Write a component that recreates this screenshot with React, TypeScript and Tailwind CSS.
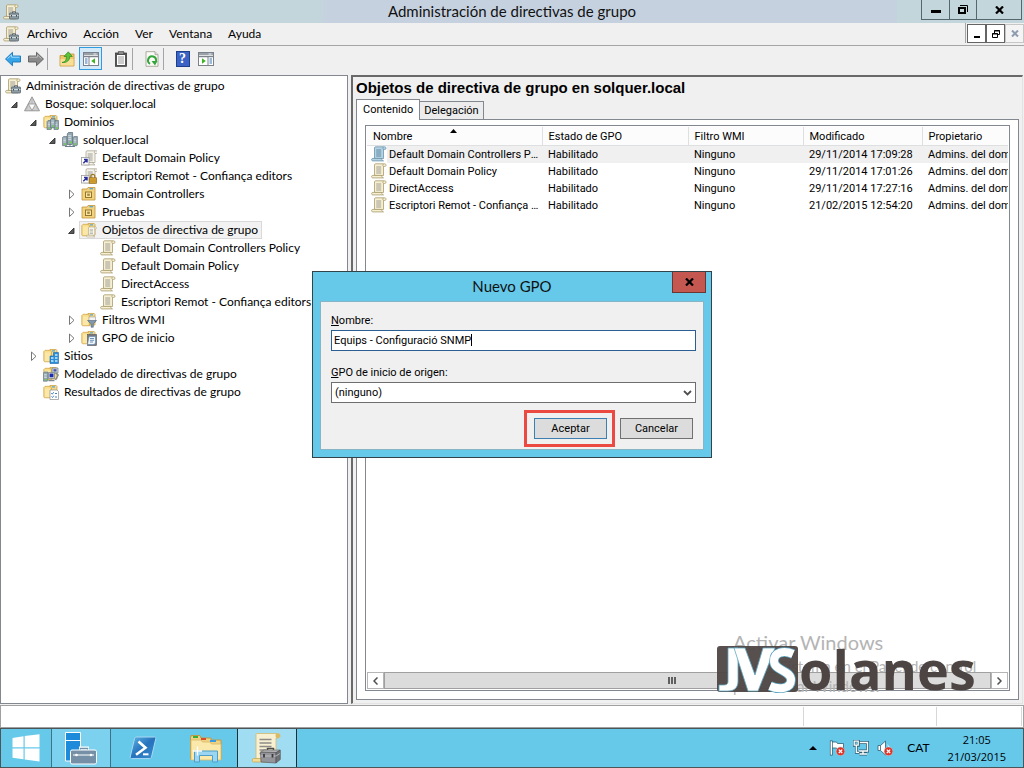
import { useState } from "react";
import type { ReactNode } from "react";
import clsx from "clsx";

const UI_FONT = "font-['Lato','Open_Sans',sans-serif]";
const LIST_FONT = "font-['Roboto','Liberation_Sans',sans-serif]";

/* ---------- icons ---------- */

function Icon({ children, size = 16, className }: { children: ReactNode; size?: number; className?: string }) {
  return (
    <svg width={size} height={size} viewBox="0 0 16 16" className={clsx("shrink-0", className)} aria-hidden="true">
      {children}
    </svg>
  );
}

function ScrollShape({ fill = "#f6efd2", edge = "#a89a6c", line = "#8b8a86" }: { fill?: string; edge?: string; line?: string }) {
  return (
    <>
      <path d="M4.500.8h9c1 0 1.500.7 1.500 1.400S14.500 3.500 13.500 3.500h-1V12.500H3.500V2C3.500 1.200 4 .8 4.500.8z" fill={fill} stroke={edge} strokeWidth=".8" />
      <path d="M1.800 12.400h8.700c0 1.200.8 2 2 2.500H2C.9 14.900.6 14.200.6 13.600s.4-1.200 1.200-1.200z" fill={fill} stroke={edge} strokeWidth=".8" />
      <path d="M12.500 1c-.8.5-.8 2 0 2.500" fill="none" stroke={edge} strokeWidth=".8" />
      <path d="M5.200 4h5M5.200 6h5M5.200 8h5M5.200 10h5" stroke={line} strokeWidth=".8" />
    </>
  );
}

function ScrollIcon({ blue = false }: { blue?: boolean }) {
  return (
    <Icon>
      {blue ? <ScrollShape fill="#b4d3e4" edge="#6c93a8" line="#4d7690" /> : <ScrollShape />}
    </Icon>
  );
}

function ToolboxShape() {
  return (
    <>
      <path d="M9.500 9V7.800h3V9" fill="none" stroke="#55626b" strokeWidth="1" />
      <rect x="6.500" y="9" width="9" height="6" rx=".6" fill="#8d9ba3" stroke="#586670" strokeWidth=".8" />
      <path d="M6.500 11.500h9" stroke="#d6dee2" strokeWidth=".9" />
      <path d="M8.500 11v1.600M13.500 11v1.600" stroke="#3f4b53" />
    </>
  );
}

function ConsoleIcon({ size = 16 }: { size?: number }) {
  return (
    <Icon size={size}>
      <ScrollShape />
      <ToolboxShape />
    </Icon>
  );
}

function FolderShape() {
  return (
    <>
      <path d="M6 2.500 7 1.500h6.200l.8.9V13H6z" fill="#f4d98a" stroke="#c79c3b" strokeWidth=".7" />
      <path d="M.8 3.500 2 2.300h5.500L8.500 4v9.800H1.500L.8 13z" fill="#f8dd8c" stroke="#cda144" strokeWidth=".7" />
      <path d="M2 4.500h5v8.500H2z" fill="#fbe7a8" />
      <path d="M9 2.900h3" stroke="#4fa3dc" strokeWidth="1.200" />
    </>
  );
}

function ServerShape({ x, y }: { x: number; y: number }) {
  return (
    <g transform={`translate(${x} ${y})`}>
      <path d="M0 1 1 0h3.600v8.500L4 9.200H0z" fill="#93a7b1" stroke="#596c76" strokeWidth=".6" />
      <path d="M.8 2.500h2.600M.8 4h2.600M.8 5.500h2.600" stroke="#dfe8ec" strokeWidth=".7" />
      <path d="M2.200 7.600h1.500" stroke="#5fe01c" strokeWidth="1.300" />
    </g>
  );
}

function ForestIcon() {
  return (
    <Icon>
      <path d="M8 .8 15.500 14.800H.5z" fill="#cfcfcf" stroke="#858585" strokeWidth=".8" />
      <path d="M8 14.500 4.300 8h7.400z" fill="#fafafa" stroke="#858585" strokeWidth=".7" />
      <path d="M8 1v6.500M4.300 8 2.500 13.500M11.700 8l2 5.500" stroke="#a9a9a9" strokeWidth=".7" />
    </Icon>
  );
}

function DomainsIcon() {
  return (
    <Icon>
      <FolderShape />
      <ServerShape x={4} y={6.500} />
      <ServerShape x={11} y={6.500} />
      <ServerShape x={7.500} y={4.500} />
    </Icon>
  );
}

function DomainIcon() {
  return (
    <Icon>
      <path d="M3 14.500h10M8 9.500v5" stroke="#6d818c" />
      <ServerShape x={0.500} y={4.500} />
      <ServerShape x={10.800} y={4.500} />
      <g transform="translate(5.300 .5) scale(1.150 1.300)">
        <ServerShape x={0} y={0} />
      </g>
    </Icon>
  );
}

function LinkIcon({ locked = false }: { locked?: boolean }) {
  return (
    <Icon>
      <g transform="translate(1.500 0)">
        <ScrollShape fill="#f5f3ea" edge="#aaa695" />
      </g>
      <rect x=".5" y="7.500" width="7.500" height="7.500" fill="#fff" stroke="#9c9c9c" strokeWidth=".8" />
      <path d="M2.300 13.200 5.600 10M3 9.600h3v3" fill="none" stroke="#2b2f95" strokeWidth="1.500" />
      {locked && (
        <>
          <path d="M9.800 10V8.400c0-2.600 4-2.600 4 0V10" fill="none" stroke="#a07a21" strokeWidth="1.200" />
          <rect x="8.300" y="9.800" width="7.200" height="5.500" fill="#dda936" stroke="#8f671a" strokeWidth=".7" />
          <path d="M8.500 12h7M8.500 13.800h7" stroke="#b2811f" strokeWidth=".7" />
        </>
      )}
    </Icon>
  );
}

function UnitIcon() {
  return (
    <Icon>
      <path d="M1 3h5l1-1.500h7V14H1z" fill="#f2d27d" stroke="#c1953a" strokeWidth=".8" />
      <path d="M8.500 2.700h3.500" stroke="#4fa3dc" strokeWidth="1.200" />
      <rect x="4.500" y="6" width="6" height="5.500" fill="#f8e6a6" stroke="#93752c" />
      <rect x="6.200" y="7.600" width="2.600" height="2.300" fill="#a98736" />
    </Icon>
  );
}

function PolicyFolderIcon() {
  return (
    <Icon>
      <FolderShape />
      <g transform="translate(5 4.500) scale(.7)">
        <ScrollShape fill="#fffdf4" />
      </g>
    </Icon>
  );
}

function FilterFolderIcon() {
  return (
    <Icon>
      <FolderShape />
      <rect x="8" y="5" width="6.500" height="5" fill="#f3f3f3" stroke="#a3a3a3" strokeWidth=".6" />
      <path d="M6.500 8.500h9L12.300 12v3.200h-2.200V12z" fill="#8197ab" stroke="#4e6378" strokeWidth=".6" />
    </Icon>
  );
}

function StarterFolderIcon() {
  return (
    <Icon>
      <FolderShape />
      <rect x="6.500" y="4.500" width="9" height="11" fill="#77777f" stroke="#54545c" strokeWidth=".6" />
      <path d="M8 6.500h6.500v6.500l-1.500 1.500H6.500z" fill="#eef5fb" stroke="#5b87b5" strokeWidth=".6" />
      <path d="M9 8.500h4M9 10.300h4M9 12h3" stroke="#5179a5" strokeWidth=".8" />
    </Icon>
  );
}

function SitesIcon() {
  return (
    <Icon>
      <FolderShape />
      <path d="M10.500 4.500H15.500V15.500H7V8h3.500z" fill="#2a8ed8" stroke="#1765a8" strokeWidth=".6" />
      <path d="M8 10h2.500M12 10h2.500M8 13h2.500M12 13h2.500M12 7h2.500" stroke="#cdeaff" strokeWidth="1.400" />
    </Icon>
  );
}

function ModelingIcon() {
  return (
    <Icon>
      <FolderShape />
      <path d="M9 2h6v5H9z" fill="#cfd5da" stroke="#777f87" strokeWidth=".7" />
      <path d="M10.500 3.200h3v2.300h-3z" fill="#4555a5" />
      <ServerShape x={0.300} y={6} />
      <path d="M5.500 6.500h6v6h-6z" fill="#cfd5da" stroke="#777f87" strokeWidth=".7" />
      <path d="M6.600 7.600h3.800v3.600H6.600z" fill="#1d2ab2" />
      <path d="M12.500 6.800 15.200 9l-2.700 5M5.500 14.500h6" fill="none" stroke="#818a92" strokeWidth="1.400" />
    </Icon>
  );
}

function ResultsIcon() {
  return (
    <Icon>
      <FolderShape />
      <path d="M7 6h7l1.500 1.500v8H7z" fill="#fff" stroke="#8e8e8e" strokeWidth=".7" />
      <path d="m8.300 9 1 1.200 1.400-2M12 9.500h2M8.500 12.500l1 1 1.300-1.800M12 13h2" fill="none" stroke="#2b74b5" strokeWidth=".9" />
    </Icon>
  );
}

function ArrowIcon({ forward = false }: { forward?: boolean }) {
  return (
    <Icon className={forward ? "-scale-x-100" : undefined}>
      <path
        d="M.5 8 7.500 1.300v3.700h8v6H7.500v3.700z"
        fill={forward ? "#8a8a8a" : "#37a4e8"}
        stroke={forward ? "#5d5d5d" : "#1774b8"}
        strokeWidth=".9"
      />
      <path d="M2.500 7.600 6.600 3.800v2.400h7.800" fill="none" stroke={forward ? "#bdbdbd" : "#a6dcff"} strokeWidth="1" />
    </Icon>
  );
}

function FolderUpIcon() {
  return (
    <Icon>
      <path d="M1 4.500h5L7.500 3H15v12H1z" fill="#efc96b" stroke="#c1953a" strokeWidth=".8" />
      <path d="M1.500 8h13v6.500h-13z" fill="#f8df98" />
      <path d="M3 11.500C6.500 11 7.500 8.500 7.500 5.500H5L9.300.8l4 4.700h-2.600c0 4-3 6.500-7.700 6z" fill="#5bc43a" stroke="#2c8a1b" strokeWidth=".7" />
    </Icon>
  );
}

function PaneIcon({ flipped = false }: { flipped?: boolean }) {
  return (
    <Icon>
      <rect x=".5" y="1.500" width="15" height="13" fill="#fff" stroke="#7b828c" />
      <path d="M1 3h14M1 5.500h14" stroke="#7b828c" strokeWidth="1.300" />
      <path d="M10.500 3h3" stroke="#e5edf5" />
      {flipped ? (
        <>
          <path d="M10 6v8" stroke="#7b828c" />
          <path d="M11.500 8h2.500M11.500 10h2.500M11.500 12h2.500" stroke="#3975b5" />
          <path d="M4 7.200v5.600L7.800 10z" fill="#3fb524" />
        </>
      ) : (
        <>
          <path d="M6 6v8" stroke="#7b828c" />
          <path d="M2 8h2.500M2 10h2.500M2 12h2.500" stroke="#3975b5" />
          <path d="M12 7.200v5.600L8.200 10z" fill="#3fb524" />
        </>
      )}
    </Icon>
  );
}

function ClipboardIcon() {
  return (
    <Icon>
      <rect x="2.500" y="2" width="11" height="13.300" fill="#555" stroke="#3c3c3c" strokeWidth=".8" />
      <rect x="4" y="4" width="8" height="10" fill="#fff" />
      <rect x="5.200" y=".7" width="5.600" height="2.800" fill="#8a8a8a" stroke="#3c3c3c" strokeWidth=".6" />
      <path d="M5 6h6M5 8h6M5 10h6M5 12h6" stroke="#8d8d8d" strokeWidth=".9" />
    </Icon>
  );
}

function RefreshIcon() {
  return (
    <Icon>
      <path d="M2 .7h9l3 3v11.600H2z" fill="#fbfbf6" stroke="#9a9a8d" strokeWidth=".8" />
      <path d="M11 .7v3h3" fill="#ddd" stroke="#9a9a8d" strokeWidth=".7" />
      <path d="M6 12.800A4 4 0 1 1 12 10" fill="none" stroke="#33a63b" strokeWidth="2" />
      <path d="M7.500 10h6L11 14.500z" fill="#33a63b" />
    </Icon>
  );
}

function HelpIcon() {
  return (
    <span className="grid h-4 w-3.5 place-items-center border border-[#1c3f8c] bg-[#3b62c4] font-['Liberation_Serif',serif] text-sm leading-none font-bold text-white">
      ?
    </span>
  );
}

function WindowsLogo() {
  return (
    <svg width="28" height="28" viewBox="0 0 28 28" aria-hidden="true">
      <path d="M.5 4 11.500 2.300V13.200H.5zM12.700 2.100 27.500.3V13.200H12.700zM.5 14.400h11v10.900L.5 23.700zM12.700 14.400H27.500v13L12.700 25.500z" fill="#fff" />
    </svg>
  );
}

function ServerManagerIcon() {
  return (
    <svg width="34" height="34" viewBox="0 0 34 34" aria-hidden="true">
      <path d="M1.500 1.500h15V30h-15z" fill="#1d8bd9" stroke="#fff" />
      <path d="M1.500 9.500h15" stroke="#fff" />
      <path d="M16.500 19v-2h7v2" fill="none" stroke="#fff" strokeWidth="3" />
      <path d="M16.500 19v-1.500h7V19" fill="none" stroke="#7590a6" strokeWidth="1.500" />
      <rect x="6.500" y="19" width="26" height="14" rx="1.500" fill="#7590a6" stroke="#fff" />
      <path d="M9 24h21" stroke="#fff" />
      <circle cx="12.500" cy="24" r="1.300" fill="#fff" />
      <circle cx="27" cy="24" r="1.300" fill="#fff" />
    </svg>
  );
}

function PowerShellIcon() {
  return (
    <svg width="28" height="26" viewBox="0 0 28 26" aria-hidden="true">
      <defs>
        <linearGradient id="ps" x1="0" y1="0" x2="1" y2="1">
          <stop offset="0" stopColor="#62b7e6" />
          <stop offset=".5" stopColor="#2672bd" />
          <stop offset="1" stopColor="#3d8fd0" />
        </linearGradient>
      </defs>
      <path d="M7.500 2h18c1 0 1.500.7 1.300 1.600L22.500 22c-.3 1-1 1.600-2 1.600h-18c-1 0-1.500-.7-1.300-1.600L5.500 3.600C5.800 2.600 6.500 2 7.500 2z" fill="url(#ps)" stroke="#a9d9f2" />
      <path d="m9.500 6.500 7 6.200-9.500 7" fill="none" stroke="#fff" strokeWidth="2.600" />
      <path d="M14 19.300h5.500" stroke="#fff" strokeWidth="2" />
    </svg>
  );
}

function ExplorerIcon() {
  return (
    <svg width="34" height="30" viewBox="0 0 34 30" aria-hidden="true">
      <path d="M2 4V2.500h9L12 5h10v2h10v19H1.500V4z" fill="#efd382" stroke="#bf9a45" />
      <path d="M4 3h5v2H4z" fill="#37ad3a" />
      <path d="M12 5h5v2h-5z" fill="#d94d2c" />
      <path d="M21 7h6v2h-6z" fill="#3b9be0" />
      <path d="M2 7h10l1.500 2H21l1.500 2H32v16H2z" fill="#fae9ab" stroke="#d9b865" strokeWidth=".8" />
      <path d="M5.500 29V18h23v11h-5v-6.500h-13V29z" fill="#9cd5f1" stroke="#4d9fca" />
      <path d="M8.500 13.500v9M4 18h9" stroke="#fff" strokeWidth="1.300" />
    </svg>
  );
}

function TaskConsoleIcon() {
  return (
    <svg width="32" height="32" viewBox="0 0 32 32" aria-hidden="true">
      <path d="M6 1.500h20c2 0 3 1 3 2.500s-1 2-2.500 2H25V27H5V3c0-1 .4-1.500 1-1.500z" fill="#f8f0d3" stroke="#d3bd7c" strokeWidth=".9" />
      <path d="M2.500 26.500H18v3.500H2.500C.8 30 .8 26.500 2.500 26.500z" fill="#f3dd96" stroke="#c9a955" strokeWidth=".8" />
      <path d="M25.500 1.600c-1.500 1-1.300 3.500 0 4.300h2.300c1.800-.8 1.800-3.500 0-4.300z" fill="#d9bb67" />
      <path d="M8.500 7.500h12M8.500 11h12M8.500 14.500h12M8.500 18h7M8.500 21.500h3" stroke="#8c8b88" strokeWidth="1.300" />
      <path d="M16.500 19v-2.500h6V19" fill="none" stroke="#4a4a4a" strokeWidth="1.500" />
      <path d="M9.500 20 13 18h16l-3 2.500z" fill="#b6b6b8" stroke="#5e5e60" strokeWidth=".6" />
      <path d="M9.500 20.500H25V31l-15-1z" fill="#94959a" stroke="#5c5c60" strokeWidth=".7" />
      <path d="M25 20.500 29.300 18v9.500L25 31z" fill="#6f7074" stroke="#4d4d50" strokeWidth=".6" />
      <path d="M9.800 24H25l4-2.500" fill="none" stroke="#c6c6c9" strokeWidth=".8" />
      <path d="M13 22v3.500M21.500 22v3.500" stroke="#3a3a3c" strokeWidth="1.800" />
    </svg>
  );
}

function ErrorBadge() {
  return (
    <>
      <circle cx="11.500" cy="11.300" r="4.400" fill="#df3327" stroke="#b9d3dd" strokeWidth=".6" />
      <path d="m9.800 9.600 3.400 3.400M13.200 9.600 9.800 13" stroke="#fff" strokeWidth="1.300" />
    </>
  );
}

function FlagIcon() {
  return (
    <Icon>
      <path d="M2.300.5v15" stroke="#2f5f73" strokeWidth="2.800" />
      <path d="M3.300 2h4.200l1 1.500h6v6h-6l-1-1.500H3.300z" fill="#fff" stroke="#2f5f73" strokeWidth=".8" />
      <path d="M2.300 1.300v13.500" stroke="#fff" strokeWidth="1.400" />
      <ErrorBadge />
    </Icon>
  );
}

function NetworkIcon() {
  return (
    <Icon>
      <path d="M5.500 2.500h9v8.500H6M10 11v3M6.500 14h7.500" fill="none" stroke="#2f5f73" strokeWidth="3" />
      <path d="M5.500 2.500h9v8.500H6M10 11v3M6.500 14h7.500" fill="none" stroke="#fff" strokeWidth="1.400" />
      <path d="M1 1h4.500v4.500H1zM3.300 5.500V12.500h3" fill="none" stroke="#2f5f73" strokeWidth="2.700" />
      <path d="M1.200 1.200h4v4h-4zM3.300 5.500V12.300h2.700" fill="none" stroke="#fff" strokeWidth="1.300" />
    </Icon>
  );
}

function SpeakerIcon() {
  return (
    <Icon>
      <path d="M1 5.500h2.500L8.500 1v14L3.500 10.500H1z" fill="#fff" stroke="#2f5f73" strokeWidth=".8" />
      <path d="M3.500 5.500v5" stroke="#2f5f73" strokeWidth=".8" />
      <path d="M10.500 5c1 .5 1.500 1.500 1.500 2.500" fill="none" stroke="#fff" />
      <ErrorBadge />
    </Icon>
  );
}

function CloseGlyph({ color = "#000" }: { color?: string }) {
  return (
    <svg width="9" height="8" viewBox="0 0 9 8" aria-hidden="true">
      <path d="M1 0.500 8 7.500M8 .5 1 7.500" stroke={color} strokeWidth="2.200" />
    </svg>
  );
}

/* ---------- window frame ---------- */

function TitleBar() {
  return (
    <header className="relative flex h-[23px] items-center justify-between bg-linear-to-r from-[#c3d6db] from-31% via-[#c6d1e0] via-32% to-[#c6d1e0] pl-[3px]">
      <ConsoleIcon />
      <h1 className="absolute inset-x-0 text-center text-[15px] leading-[23px] text-[#111]">Administración de directivas de grupo</h1>
      <div className="relative flex h-[23px] items-start bg-[#c3d6db] pr-0.5 pl-6">
        <button type="button" aria-label="Minimizar" className="grid h-5 w-[29px] place-items-center border border-t-0 border-[#55666c]">
          <span className="mt-1 h-[3px] w-2.5 bg-black" />
        </button>
        <button type="button" aria-label="Restaurar" className="grid h-5 w-[26px] place-items-center border-b border-[#55666c]">
          <svg width="10" height="9" viewBox="0 0 10 9" aria-hidden="true">
            <path d="M2 .5h7.500V7" fill="none" stroke="#000" />
            <path d="M1 3h6v5H1z" fill="none" stroke="#000" strokeWidth="2" />
          </svg>
        </button>
        <button type="button" aria-label="Cerrar" className="grid h-5 w-[46px] place-items-center border border-t-0 border-[#55666c]">
          <CloseGlyph />
        </button>
      </div>
    </header>
  );
}

const menus = ["Archivo", "Acción", "Ver", "Ventana", "Ayuda"];

function MenuBar() {
  return (
    <div className="flex h-[23px] items-center justify-between border-b border-[#a5a5a8] bg-[#f0f0f0] pl-[3px]">
      <nav className="flex items-center gap-4">
        <span className="-mr-2">
          <ConsoleIcon />
        </span>
        {menus.map((menu) => (
          <button key={menu} type="button" className="text-xs leading-5">
            {menu}
          </button>
        ))}
      </nav>
      <div className="flex h-5 self-start border-l border-[#a5a5a8] pl-px">
        <button type="button" aria-label="Minimizar consola" className="mt-px grid h-[19px] w-[19px] place-items-center border border-[#646464] bg-white">
          <span className="mt-1.5 h-0.5 w-1.5 bg-black" />
        </button>
        <button type="button" aria-label="Restaurar consola" className="mt-px grid h-[19px] w-[19px] place-items-center border border-[#646464] bg-white">
          <svg width="8" height="8" viewBox="0 0 8 8" aria-hidden="true">
            <path d="M2.500 3V.5h5v4H6" fill="none" stroke="#000" />
            <path d="M2 1h6" stroke="#000" />
            <path d="M.5 3.500h5v4h-5z" fill="#fff" stroke="#000" />
            <path d="M0 4h6" stroke="#000" />
          </svg>
        </button>
        <button type="button" aria-label="Cerrar consola" className="mt-px grid h-[19px] w-[19px] place-items-center border border-[#c6c6c6] bg-[#f4f4f4]">
          <svg width="8" height="7" viewBox="0 0 8 7" aria-hidden="true">
            <path d="M1 .5 7 6.500M7 .5 1 6.500" stroke="#8f9bb0" strokeWidth="2" />
          </svg>
        </button>
      </div>
    </div>
  );
}

function ToolButton({ label, active = false, children }: { label: string; active?: boolean; children: ReactNode }) {
  return (
    <button
      type="button"
      aria-label={label}
      className={clsx("grid h-[23px] w-[23px] place-items-center border", active ? "border-[#2f9be0] bg-[#d5eaf9]" : "border-transparent")}
    >
      {children}
    </button>
  );
}

function Divider() {
  return <span className="mr-[7px] h-[22px] w-px bg-[#a5a5a8]" />;
}

function Toolbar() {
  return (
    <div className="flex h-[29px] items-center bg-[#f0f0f0] px-px pb-1">
      <ToolButton label="Atrás">
        <ArrowIcon />
      </ToolButton>
      <ToolButton label="Adelante">
        <ArrowIcon forward />
      </ToolButton>
      <Divider />
      <ToolButton label="Subir un nivel">
        <FolderUpIcon />
      </ToolButton>
      <span className="w-px" />
      <ToolButton label="Mostrar árbol de consola" active>
        <PaneIcon />
      </ToolButton>
      <span className="w-[7px]" />
      <ToolButton label="Copiar">
        <ClipboardIcon />
      </ToolButton>
      <Divider />
      <ToolButton label="Actualizar">
        <RefreshIcon />
      </ToolButton>
      <Divider />
      <ToolButton label="Ayuda">
        <HelpIcon />
      </ToolButton>
      <ToolButton label="Mostrar panel de acciones">
        <PaneIcon flipped />
      </ToolButton>
    </div>
  );
}

/* ---------- console tree ---------- */

type TreeNode = {
  label: string;
  icon: ReactNode;
  level: number;
  state?: "open" | "closed";
  selected?: boolean;
};

const tree: TreeNode[] = [
  { label: "Administración de directivas de grupo", icon: <ConsoleIcon />, level: 0 },
  { label: "Bosque: solquer.local", icon: <ForestIcon />, level: 1, state: "open" },
  { label: "Dominios", icon: <DomainsIcon />, level: 2, state: "open" },
  { label: "solquer.local", icon: <DomainIcon />, level: 3, state: "open" },
  { label: "Default Domain Policy", icon: <LinkIcon />, level: 4 },
  { label: "Escriptori Remot - Confiança editors", icon: <LinkIcon locked />, level: 4 },
  { label: "Domain Controllers", icon: <UnitIcon />, level: 4, state: "closed" },
  { label: "Pruebas", icon: <UnitIcon />, level: 4, state: "closed" },
  { label: "Objetos de directiva de grupo", icon: <PolicyFolderIcon />, level: 4, state: "open", selected: true },
  { label: "Default Domain Controllers Policy", icon: <ScrollIcon />, level: 5 },
  { label: "Default Domain Policy", icon: <ScrollIcon />, level: 5 },
  { label: "DirectAccess", icon: <ScrollIcon />, level: 5 },
  { label: "Escriptori Remot - Confiança editors", icon: <ScrollIcon />, level: 5 },
  { label: "Filtros WMI", icon: <FilterFolderIcon />, level: 4, state: "closed" },
  { label: "GPO de inicio", icon: <StarterFolderIcon />, level: 4, state: "closed" },
  { label: "Sitios", icon: <SitesIcon />, level: 2, state: "closed" },
  { label: "Modelado de directivas de grupo", icon: <ModelingIcon />, level: 2 },
  { label: "Resultados de directivas de grupo", icon: <ResultsIcon />, level: 2 }
];

const indents = ["pl-0.5", "pl-[21px]", "pl-10", "pl-[59px]", "pl-[78px]", "pl-[97px]"];

function Expander({ state, label }: { state: "open" | "closed"; label: string }) {
  return (
    <button type="button" aria-label={label} aria-expanded={state === "open"} className="-ml-3.5 grid h-[18px] w-3.5 items-center pl-[3px]">
      <svg width="8" height="10" viewBox="0 0 8 10" aria-hidden="true">
        {state === "open" ? (
          <path d="M6 3v5.500H.5z" fill="#5a5a5a" stroke="#262626" strokeWidth=".8" />
        ) : (
          <path d="M1.500 1v8.500L6 5.300z" fill="#fff" stroke="#777" />
        )}
      </svg>
    </button>
  );
}

function ConsoleTree() {
  return (
    <aside className="w-[348px] shrink-0 overflow-hidden border border-[#828790] bg-white pt-px">
      <ul>
        {tree.map((node, index) => (
          <li key={index} className={clsx("flex h-[18px] items-center", indents[node.level])}>
            {node.state && <Expander state={node.state} label={node.label} />}
            <div
              className={clsx(
                "flex h-[18px] items-center gap-[5px] border pr-[3px] pl-px",
                node.selected ? "border-[#d9d9d9] bg-[#f2f2f2]" : "border-transparent"
              )}
            >
              {node.icon}
              <span className="text-xs leading-4 whitespace-nowrap">{node.label}</span>
            </div>
          </li>
        ))}
      </ul>
    </aside>
  );
}

/* ---------- result pane ---------- */

const policies = [
  { name: "Default Domain Controllers Policy", state: "Habilitado", filter: "Ninguno", modified: "29/11/2014 17:09:28", owner: "Admins. del dominio" },
  { name: "Default Domain Policy", state: "Habilitado", filter: "Ninguno", modified: "29/11/2014 17:01:26", owner: "Admins. del dominio" },
  { name: "DirectAccess", state: "Habilitado", filter: "Ninguno", modified: "29/11/2014 17:27:16", owner: "Admins. del dominio" },
  { name: "Escriptori Remot - Confiança editors", state: "Habilitado", filter: "Ninguno", modified: "21/02/2015 12:54:20", owner: "Admins. del dominio" }
];

const columns = ["Nombre", "Estado de GPO", "Filtro WMI", "Modificado", "Propietario"];

function PolicyTable() {
  return (
    <table className="w-full table-fixed border-collapse text-left text-[11px]">
      <colgroup>
        <col className="w-[175px]" />
        <col className="w-[146px]" />
        <col className="w-[115px]" />
        <col className="w-[119px]" />
        <col />
      </colgroup>
      <thead>
        <tr className="h-[18px]">
          {columns.map((column, index) => (
            <th key={column} className="relative overflow-hidden border-r border-b border-[#dedfe1] bg-[#fcfcfc] p-0 pt-0.5 pl-1.5 leading-[15px] font-normal whitespace-nowrap last:border-r-0">
              {column}
              {index === 0 && (
                <svg width="7" height="4" viewBox="0 0 7 4" className="absolute top-0.5 left-[83px]" aria-hidden="true">
                  <path d="M0 4 3.500 0 7 4z" />
                </svg>
              )}
            </th>
          ))}
        </tr>
      </thead>
      <tbody>
        {policies.map((policy, index) => (
          <tr key={policy.name} className="h-[17px] leading-[17px]">
            <td className="p-0 pl-1">
              <div className="flex items-center">
                <ScrollIcon blue={index === 0} />
                <span className={clsx("min-w-0 flex-1 truncate pl-0.5", index === 0 && "bg-[#f0f0f0]")}>{policy.name}</span>
              </div>
            </td>
            {[policy.state, policy.filter, policy.modified, policy.owner].map((value, cell) => (
              <td key={cell} className={clsx("overflow-hidden p-0 pl-1.5 whitespace-nowrap", index === 0 && "bg-[#f0f0f0]")}>
                {value}
              </td>
            ))}
          </tr>
        ))}
      </tbody>
    </table>
  );
}

function ScrollBar() {
  return (
    <div className="flex h-[17px] bg-[#f0f0f0]">
      <button type="button" aria-label="Desplazar a la izquierda" className="grid w-[17px] place-items-center border border-[#b5b5b5] bg-white">
        <svg width="5" height="8" viewBox="0 0 5 8" aria-hidden="true">
          <path d="M4.500.5 1 4l3.500 3.500" fill="none" stroke="#505050" strokeWidth="1.500" />
        </svg>
      </button>
      <div className="flex flex-1 items-center justify-center gap-px border border-[#a0a0a0] bg-[#dcdcdc] pr-8">
        <span className="h-[7px] w-0.5 bg-[#606060]" />
        <span className="h-[7px] w-0.5 bg-[#606060]" />
        <span className="h-[7px] w-0.5 bg-[#606060]" />
      </div>
      <button type="button" aria-label="Desplazar a la derecha" className="grid w-[17px] place-items-center border border-[#b5b5b5] bg-white">
        <svg width="5" height="8" viewBox="0 0 5 8" aria-hidden="true">
          <path d="M.5.5 4 4 .5 7.500" fill="none" stroke="#505050" strokeWidth="1.500" />
        </svg>
      </button>
    </div>
  );
}

function ResultPane() {
  return (
    <section className={clsx("mr-px ml-[3px] flex min-w-0 flex-1 flex-col border-t-2 border-r border-b border-l-2 border-[#696969] border-r-[#e3e3e3] border-b-[#e3e3e3] bg-[#f0f0f0] pr-[3px] pb-[3px] pl-[3px]", LIST_FONT)}>
      <h2 className="font-['Liberation_Sans',Arial,sans-serif] text-[15px] leading-[22px] font-bold">Objetos de directiva de grupo en solquer.local</h2>
      <div className="-mb-px flex items-end">
        <button type="button" className="z-10 h-[21px] border border-b-0 border-[#828790] bg-white px-1.5 text-[11px] leading-4">
          Contenido
        </button>
        <button type="button" className="-ml-px h-[19px] border border-[#828790] bg-[#ececec] px-1 pt-px text-[11px] leading-4">
          Delegación
        </button>
      </div>
      <div className="flex flex-1 flex-col border border-[#828790] bg-white px-2 pt-[5px] pb-2">
        <div className="flex flex-1 flex-col justify-between border border-[#828790] p-px">
          <PolicyTable />
          <ScrollBar />
        </div>
      </div>
    </section>
  );
}

/* ---------- dialog ---------- */

function NewPolicyDialog() {
  const [name, setName] = useState("Equips - Configuració SNMP");

  return (
    <div role="dialog" aria-labelledby="dialog-title" className="absolute top-[271px] left-1/2 z-20 w-[400px] -translate-x-1/2 border border-[#33434a] bg-[#66c9ea] px-[7px] pb-[7px]">
      <div className="relative flex h-[29px] items-center justify-center">
        <h2 id="dialog-title" className="text-[15px] text-[#111]">
          Nuevo GPO
        </h2>
        <button type="button" aria-label="Cerrar" className="absolute top-0 -right-0.5 grid h-[21px] w-[34px] place-items-center border border-t-0 border-[#6b3632] bg-[#c4574f]">
          <CloseGlyph />
        </button>
      </div>
      <form className={clsx("border border-[#86b5c6] bg-[#f0f0f0] pt-[11px] pr-[7px] pb-0.5 pl-2.5 text-[11px]", LIST_FONT)} onSubmit={(event) => event.preventDefault()}>
        <label htmlFor="gpo-name" className="block leading-4">
          <span className="underline">N</span>ombre:
        </label>
        <div className="relative mt-px">
          <input
            id="gpo-name"
            type="text"
            value={name}
            onChange={(event) => setName(event.target.value)}
            className="block h-[21px] w-full border border-[#2b5f93] bg-white px-0.5 pb-px outline-none"
          />
          <span className="absolute top-1 left-[140px] h-3 w-px bg-black" />
        </div>
        <label htmlFor="gpo-source" className="mt-3.5 block leading-4">
          <span className="underline">G</span>PO de inicio de origen:
        </label>
        <div className="relative mt-px">
          <select id="gpo-source" className="block h-[21px] w-full appearance-none border border-[#6e6e6e] bg-white px-[3px] pt-0.5 outline-none">
            <option>(ninguno)</option>
          </select>
          <svg width="9" height="6" viewBox="0 0 9 6" className="pointer-events-none absolute top-2 right-1" aria-hidden="true">
            <path d="M1 1l3.500 3.500L8 1" fill="none" stroke="#505050" strokeWidth="1.800" />
          </svg>
        </div>
        <div className="mt-[7px] flex items-center justify-end gap-[5px] pr-[3px]">
          <div className="border-3 border-[#eb4a42] py-[5px] pr-[5px] pl-[7px]">
            <button type="submit" className="block h-[21px] w-[73px] border border-[#3c7fb1] bg-[#dcdcdc] pt-0.5">
              Aceptar
            </button>
          </div>
          <button type="button" className="h-[21px] w-[73px] border border-[#707070] bg-[#dcdcdc] pt-0.5">
            Cancelar
          </button>
        </div>
      </form>
    </div>
  );
}

/* ---------- desktop ---------- */

function Watermark() {
  return (
    <div className="pointer-events-none absolute right-[43px] bottom-[72px] z-10 w-[248px] text-[#b4b4b4]">
      <p className="text-xl leading-7">Activar Windows</p>
      <p className="text-[15px] leading-5 whitespace-nowrap">Vaya a Sistema en el Panel de control</p>
      <p className="text-[15px] leading-5 whitespace-nowrap">para activar Windows.</p>
    </div>
  );
}

const LOGO_S = "M76 13C67 9 57 11 57 20C57 30 74 29 74 39C74 48 62 49 53 45";

function BrandLogo() {
  return (
    <svg width="258" height="56" viewBox="0 0 258 56" className="pointer-events-none absolute right-[49px] bottom-[71px] z-10" role="img" aria-label="JMSolanes">
      <rect x="0" y="5" width="81" height="46" rx="3" fill="#4d4543" fillOpacity=".94" />
      <g fill="#fff" stroke="#62a9c4" strokeWidth=".8">
        <path d="M11 7H21V40c0 7-4 10-10 10H2v-6h4c4 0 5-1 5-4z" />
        <path d="M17 7h11l10 27L46 7h12L41 50H31z" />
      </g>
      <path d={LOGO_S} fill="none" stroke="#62a9c4" strokeWidth="9.600" />
      <path d={LOGO_S} fill="none" stroke="#fff" strokeWidth="8" />
      <text x="82" y="49" fontSize="54" className="fill-[#4d4543] font-['Open_Sans','Noto_Sans',sans-serif] font-bold">
        olanes
      </text>
    </svg>
  );
}

function StatusBar() {
  return (
    <div className="mt-px flex h-[23px] border border-[#a0a0a0] bg-white">
      <span className="my-px flex-1 border-r border-[#d7d7d7]" />
      <span className="my-px w-[133px] border-r border-[#d7d7d7]" />
      <span className="my-px mr-px w-[85px] border-r border-[#d7d7d7]" />
    </div>
  );
}

function Taskbar() {
  return (
    <footer className="flex h-10 items-stretch justify-between border border-[#4c5558] bg-[#66c9ea]">
      <div className="flex">
        <button type="button" aria-label="Inicio" className="grid w-[50px] place-items-center">
          <WindowsLogo />
        </button>
        <button type="button" aria-label="Administrador del servidor" className="grid w-[60px] place-items-center border-x border-[#3c7386] bg-[#7cd1ee]">
          <ServerManagerIcon />
        </button>
        <button type="button" aria-label="Windows PowerShell" className="grid w-[64px] place-items-center">
          <PowerShellIcon />
        </button>
        <button type="button" aria-label="Explorador de archivos" className="grid w-[62px] place-items-center">
          <ExplorerIcon />
        </button>
        <button type="button" aria-label="Administración de directivas de grupo" className="grid w-[60px] place-items-center border-x border-[#1f2f35] bg-[#a0dcf2]">
          <TaskConsoleIcon />
        </button>
      </div>
      <div className="flex items-center gap-2 pr-[17px] text-xs">
        <button type="button" aria-label="Mostrar iconos ocultos" className="mr-1">
          <svg width="8" height="4" viewBox="0 0 8 4" aria-hidden="true">
            <path d="M0 4 4 0l4 4z" />
          </svg>
        </button>
        <FlagIcon />
        <NetworkIcon />
        <SpeakerIcon />
        <span className="ml-1.5">CAT</span>
        <p className="ml-2.5 text-center font-['Open_Sans','Noto_Sans',sans-serif] text-[11px] leading-[17px]">
          21:05
          <br />
          21/03/2015
        </p>
      </div>
    </footer>
  );
}

export default function App() {
  return (
    <div className={clsx("relative flex min-h-screen w-full flex-col overflow-hidden bg-[#f0f0f0] text-black", UI_FONT)}>
      <TitleBar />
      <MenuBar />
      <Toolbar />
      <main className="flex flex-1">
        <ConsoleTree />
        <ResultPane />
      </main>
      <StatusBar />
      <Taskbar />
      <Watermark />
      <BrandLogo />
      <NewPolicyDialog />
    </div>
  );
}
